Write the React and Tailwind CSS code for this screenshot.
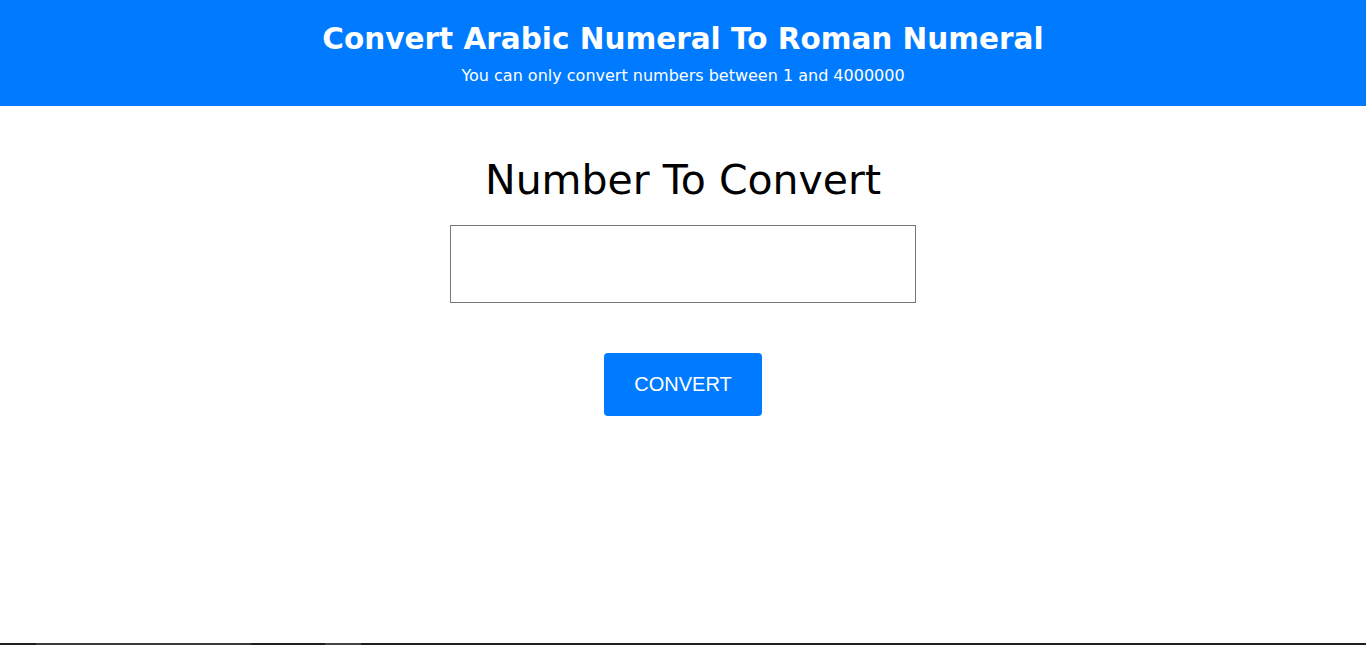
export default function App() {
  return (
    <div className="flex h-[645px] flex-col bg-white">
      <header className="flex h-[106px] flex-col items-center bg-[#007bff] pt-[19px] text-white font-['DejaVu_Sans',sans-serif]">
        <h1 className="text-[29.5px] font-bold leading-[40px]">Convert Arabic Numeral To Roman Numeral</h1>
        <p className="mt-[7px] text-[16px] leading-[20px]">You can only convert numbers between 1 and 4000000</p>
      </header>
      <main className="flex flex-1 flex-col items-center">
        <h2 className="mt-[49px] text-[41px] leading-[50px] text-black font-['DejaVu_Sans',sans-serif]">Number To Convert</h2>
        <input type="text" className="mt-[20px] h-[78px] w-[466px] border border-[#767676] bg-white outline-none" />
        <button className="mt-[50px] h-[63px] w-[158px] rounded-[4px] bg-[#007bff] pb-[2px] text-[20px] text-white font-['Liberation_Sans',sans-serif]">CONVERT</button>
      </main>
      <div className="relative h-[2px] bg-[#1e1e1e]">
        <div className="absolute left-[36px] top-0 h-[2px] w-[215px] bg-[#3a3a3a]" />
        <div className="absolute left-[325px] top-0 h-[2px] w-[36px] bg-[#444]" />
      </div>
    </div>
  );
}
